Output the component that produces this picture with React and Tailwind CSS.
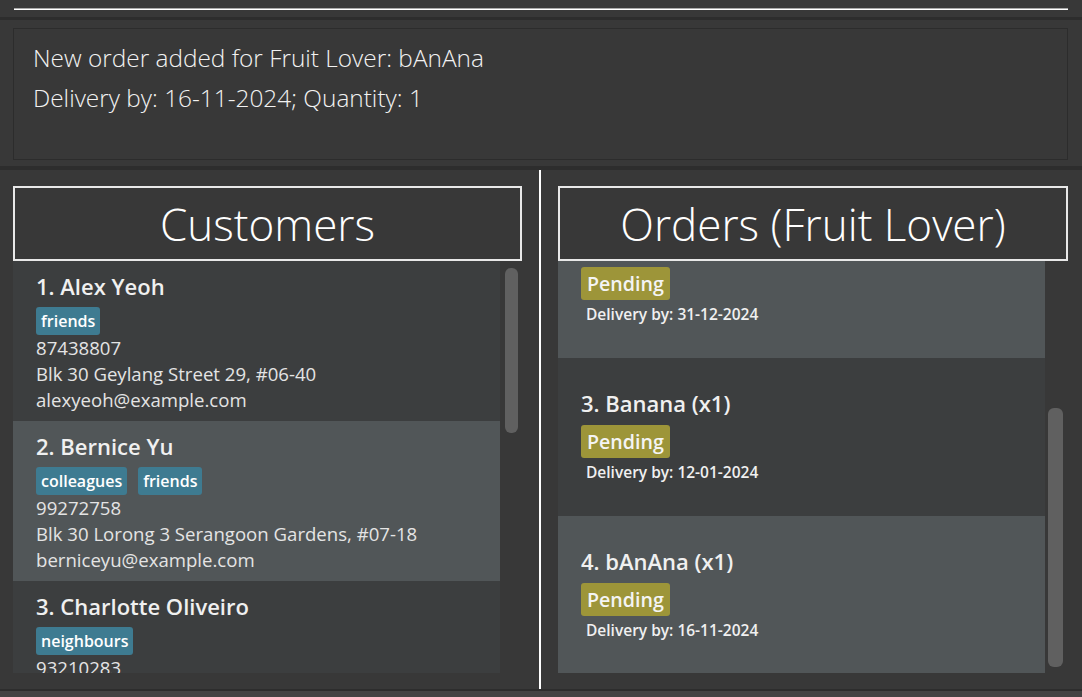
import React from 'react';

const customers = [
  {
    name: '1. Alex Yeoh',
    tags: ['friends'],
    phone: '87438807',
    address: 'Blk 30 Geylang Street 29, #06-40',
    email: 'alexyeoh@example.com',
  },
  {
    name: '2. Bernice Yu',
    tags: ['colleagues', 'friends'],
    phone: '99272758',
    address: 'Blk 30 Lorong 3 Serangoon Gardens, #07-18',
    email: 'berniceyu@example.com',
  },
  {
    name: '3. Charlotte Oliveiro',
    tags: ['neighbours'],
    phone: '93210283',
    address: 'Blk 11 Ang Mo Kio Street 74, #11-04',
    email: 'charlotte@example.com',
  },
];

const orders = [
  { title: '1. Apple (x2)', status: 'Pending', date: '05-12-2024' },
  { title: '2. Mango (x3)', status: 'Pending', date: '31-12-2024' },
  { title: '3. Banana (x1)', status: 'Pending', date: '12-01-2024' },
  { title: '4. bAnAna (x1)', status: 'Pending', date: '16-11-2024' },
];

const CustomerCard = ({ customer, index }) => (
  <div
    className={`h-[160px] shrink-0 pl-[23px] pt-[10px] ${
      index % 2 === 0 ? 'bg-[#3c3e3f]' : 'bg-[#515658]'
    }`}
  >
    <div className="h-[30px] text-[22px] leading-[30px] font-semibold text-[#f0f0f0]">
      {customer.name}
    </div>
    <div className="mt-[6px] flex gap-[11px]">
      {customer.tags.map((tag) => (
        <span
          key={tag}
          className="h-[28px] px-[5px] rounded-[3px] bg-[#3e7b91] text-[16px] leading-[28px] font-semibold text-white"
        >
          {tag}
        </span>
      ))}
    </div>
    <div className="text-[18.6px] leading-[26px] text-[#e4e4e4]">
      <div>{customer.phone}</div>
      <div>{customer.address}</div>
      <div>{customer.email}</div>
    </div>
  </div>
);

const OrderCard = ({ order, index }) => (
  <div
    className={`h-[158px] shrink-0 pl-[23px] pt-[30px] ${
      index % 2 === 0 ? 'bg-[#3c3e3f]' : 'bg-[#515658]'
    }`}
  >
    <div className="h-[30px] text-[22px] leading-[30px] font-semibold text-[#f0f0f0]">
      {order.title}
    </div>
    <div className="mt-[7px] flex">
      <span className="h-[33px] px-[6px] rounded-[3px] bg-[#9d9539] text-[19.6px] leading-[33px] font-semibold text-[#f4f4f4]">
        {order.status}
      </span>
    </div>
    <div className="mt-[4px] pl-[5px] text-[15.5px] leading-[20px] font-semibold text-[#f0f0f0]">
      Delivery by: {order.date}
    </div>
  </div>
);

const PanelHeader = ({ title, width }) => (
  <div
    className={`${width} h-[75px] shrink-0 border-2 border-[#e8e8e8] flex items-center justify-center text-[44px] leading-[60px] font-light text-white`}
  >
    {title}
  </div>
);

export default function App() {
  return (
    <div
      className="w-[1082px] h-[697px] bg-[#383838] overflow-hidden flex flex-col"
      style={{ fontFamily: '"Open Sans", "Noto Sans", sans-serif' }}
    >
      {/* command box (scrolled up) */}
      <div className="h-[17px] shrink-0 pt-[8px] pl-[14px]">
        <div className="w-[1054px] h-[2px] bg-white border-t border-[#a8a8a8]" />
      </div>
      <div className="h-[3px] shrink-0 bg-[#2d2d2d]" />

      {/* result display */}
      <div className="h-[146px] shrink-0 pt-[8px] pl-[13px]">
        <div className="w-[1055px] h-[132px] border border-[#2c2c2c] pl-[19px] pt-[9px] text-[24.4px] leading-[40px] font-light text-[#f2f2f2]">
          <div>New order added for Fruit Lover: bAnAna</div>
          <div>Delivery by: 16-11-2024; Quantity: 1</div>
        </div>
      </div>
      <div className="h-[4px] shrink-0 bg-[#2d2d2d]" />

      {/* lists */}
      <div className="h-[519px] shrink-0 flex">
        <div className="w-[539px] shrink-0 pl-[13px] pt-[16px] flex flex-col">
          <PanelHeader title="Customers" width="w-[509px]" />
          <div className="flex h-[412px]">
            <div className="w-[487px] h-[412px] overflow-hidden flex flex-col">
              {customers.map((c, i) => (
                <CustomerCard key={c.name} customer={c} index={i} />
              ))}
            </div>
            <div className="w-[22px] pl-[5px] pt-[7px]">
              <div className="w-[13px] h-[165px] rounded-[6px] bg-[#606060]" />
            </div>
          </div>
        </div>

        <div className="w-[2px] shrink-0 bg-white" />

        <div className="flex-1 pl-[17px] pt-[16px] flex flex-col">
          <PanelHeader title="Orders (Fruit Lover)" width="w-[510px]" />
          <div className="flex h-[412px]">
            <div className="w-[487px] h-[412px] overflow-hidden">
              <div className="-mt-[219px] flex flex-col">
                {orders.map((o, i) => (
                  <OrderCard key={o.title} order={o} index={i} />
                ))}
              </div>
            </div>
            <div className="w-[23px] pl-[3px] pt-[147px]">
              <div className="w-[15px] h-[259px] rounded-[6px] bg-[#606060]" />
            </div>
          </div>
        </div>
      </div>

      {/* status bar */}
      <div className="h-[2px] shrink-0 bg-[#2d2d2d]" />
      <div className="flex-1 bg-[#434343]" />
    </div>
  );
}
